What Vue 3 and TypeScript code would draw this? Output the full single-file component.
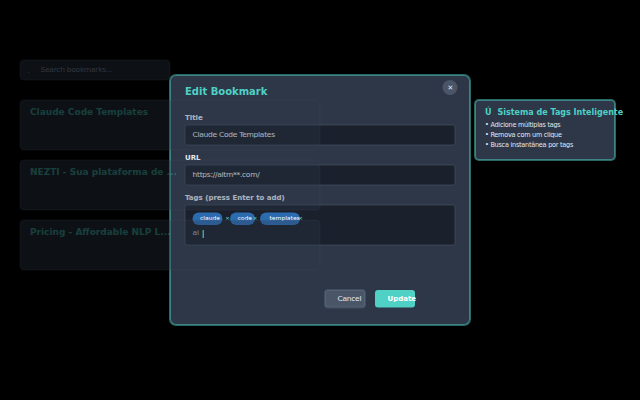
<script setup lang="ts">
interface Tag {
  name: string
  kind: string
}

const bookmarks: string[] = [
  'Claude Code Templates',
  'NEZTI - Sua plataforma de ...',
  'Pricing - Affordable NLP L...',
]

const tags: Tag[] = [
  { name: 'claude', kind: 'first' },
  { name: 'code', kind: 'second' },
  { name: 'templates', kind: 'third' },
]

const tips: string[] = ['Adicione múltiplas tags', 'Remova com um clique', 'Busca instantânea por tags']
</script>

<template>
  <div class="viewport">
    <div class="page">
      <main class="backdrop">
        <div class="search"><span class="lens">.</span><span>Search bookmarks...</span></div>
        <article v-for="title in bookmarks" :key="title" class="card">{{ title }}</article>
      </main>

      <section class="modal">
        <header class="head">
          <h2>Edit Bookmark</h2>
          <button class="close">✕</button>
        </header>
        <label class="label">Title</label>
        <div class="input">Claude Code Templates</div>
        <label class="label">URL</label>
        <div class="input">https://aitm**.com/</div>
        <label class="label">Tags (press Enter to add)</label>
        <div class="tagbox">
          <div class="tags">
            <span v-for="tag in tags" :key="tag.name" class="slot" :class="tag.kind">
              <span class="tag">{{ tag.name }}</span><span class="remove">×</span>
            </span>
          </div>
          <div class="typing">ai<i class="caret"></i></div>
        </div>
        <footer class="actions">
          <button class="btn cancel">Cancel</button>
          <button class="btn update">Update</button>
        </footer>
      </section>

      <aside class="tooltip">
        <h3><span class="mark">Ú</span>Sistema de Tags Inteligente</h3>
        <p v-for="tip in tips" :key="tip">• {{ tip }}</p>
      </aside>
    </div>
  </div>
</template>

<style>
body {
  background: #000;
}
</style>

<style scoped>
.viewport {
  width: 640px;
  height: 400px;
  overflow: hidden;
  background: #000;
}
/* Designed on a 1280x800 canvas and shown at half size. */
.page {
  position: relative;
  width: 1280px;
  height: 800px;
  overflow: hidden;
  transform: scale(0.5);
  transform-origin: 0 0;
  font-family: 'DejaVu Sans', sans-serif;
  font-size: 14px;
  white-space: nowrap;
}
.page * {
  box-sizing: border-box;
}
h2,
h3,
p {
  margin: 0;
}
button {
  border: 0;
  padding: 0;
  font-family: inherit;
}
.backdrop {
  position: relative;
  z-index: 2;
  width: 660px;
  padding: 120px 0 0 40px;
  opacity: 0.3;
  pointer-events: none;
}
.input,
.tagbox {
  box-shadow: 0 0 0 2px rgba(74, 85, 104, 0.3), inset 0 0 0 2px rgba(74, 85, 104, 0.3);
}
.search,
.card {
  box-shadow: 0 0 0 2px rgba(74, 85, 104, 0.25), inset 0 0 0 2px rgba(74, 85, 104, 0.4);
}
.search {
  display: flex;
  width: 300px;
  height: 40px;
  margin-bottom: 40px;
  padding-left: 15px;
  border-radius: 8px;
  background: #2d3748;
  color: #a0aec0;
  font-size: 15px;
  letter-spacing: -0.54px;
  line-height: 38px;
}
.lens {
  width: 26px;
  line-height: 42px;
}
.card {
  width: 600px;
  height: 100px;
  margin-bottom: 20px;
  padding-left: 20px;
  border-radius: 8px;
  background: #2d3748;
  color: #4fd1c5;
  font-size: 18px;
  font-weight: bold;
  line-height: 47px;
}
.modal {
  position: absolute;
  left: 340px;
  top: 150px;
  width: 600px;
  height: 500px;
  padding: 10px 30px 0;
  border-radius: 12px;
  background: #2d3748;
  box-shadow: 0 0 0 2px rgba(79, 209, 197, 0.5), inset 0 0 0 2px rgba(79, 209, 197, 0.5);
}
.head {
  display: flex;
  justify-content: space-between;
  height: 60px;
  margin-right: -5px;
}
h2 {
  color: #4fd1c5;
  font-size: 20px;
  line-height: 46px;
}
.close {
  width: 30px;
  height: 30px;
  padding-left: 2px;
  border-radius: 50%;
  background: #4a5568;
  color: #e2e8f0;
  font-size: 14px;
  line-height: 31px;
  text-align: center;
}
.label {
  display: block;
  height: 30px;
  color: #e2e8f0;
  font-weight: bold;
  line-height: 31px;
}
.input {
  height: 40px;
  margin-bottom: 10px;
  padding-left: 15px;
  border-radius: 6px;
  background: #1a202c;
  color: #e2e8f0;
  font-size: 15px;
  letter-spacing: -0.56px;
  line-height: 39px;
}
.tagbox {
  height: 80px;
  padding: 15px 0 0 15px;
  border-radius: 6px;
  background: #1a202c;
}
.tags {
  display: flex;
  height: 25px;
}
.slot {
  display: flex;
  font-size: 12px;
  line-height: 22px;
}
.first {
  width: 75px;
}
.second {
  width: 60px;
}
.tag {
  flex: none;
  width: 60px;
  height: 25px;
  padding-left: 15px;
  border-radius: 12.5px;
  background: #2b6cb0;
  color: #fff;
}
.second .tag {
  width: 50px;
}
.third .tag {
  width: 80px;
  padding-left: 19px;
}
.remove {
  margin-left: 5px;
  color: #4fd1c5;
}
.second .remove {
  margin-left: -5px;
}
.third .remove {
  margin-left: -4px;
}
.typing {
  display: flex;
  height: 32px;
  color: #a0aec0;
  font-size: 15px;
  letter-spacing: -0.4px;
  line-height: 31px;
}
.caret {
  width: 3px;
  height: 16px;
  margin: 10px 0 0 7px;
  background: #4fd1c5;
}
.actions {
  display: flex;
  gap: 20px;
  margin: 90px 0 0 280px;
}
.btn {
  width: 80px;
  height: 35px;
  padding-left: 25px;
  border-radius: 6px;
  font-size: 14px;
  line-height: 35px;
  text-align: left;
  white-space: nowrap;
}
.cancel {
  background: #4a5568;
  box-shadow: 0 0 0 2px rgba(113, 128, 150, 0.3), inset 0 0 0 2px rgba(113, 128, 150, 0.3);
  color: #e2e8f0;
  font-size: 15px;
  letter-spacing: -0.56px;
}
.update {
  background: #4fd1c5;
  color: #fff;
  font-weight: bold;
}
.tooltip {
  position: absolute;
  left: 950px;
  top: 200px;
  width: 280px;
  height: 120px;
  padding: 10px 0 0 20px;
  border-radius: 8px;
  background: #2d3748;
  box-shadow: 0 0 0 2px rgba(79, 209, 197, 0.5), inset 0 0 0 2px rgba(79, 209, 197, 0.5);
}
h3 {
  display: flex;
  color: #4fd1c5;
  font-size: 16px;
  line-height: 30px;
}
.mark {
  flex: none;
  width: 25px;
}
.tooltip p {
  color: #e2e8f0;
  font-size: 13px;
  letter-spacing: -0.5px;
  line-height: 20px;
}
</style>
